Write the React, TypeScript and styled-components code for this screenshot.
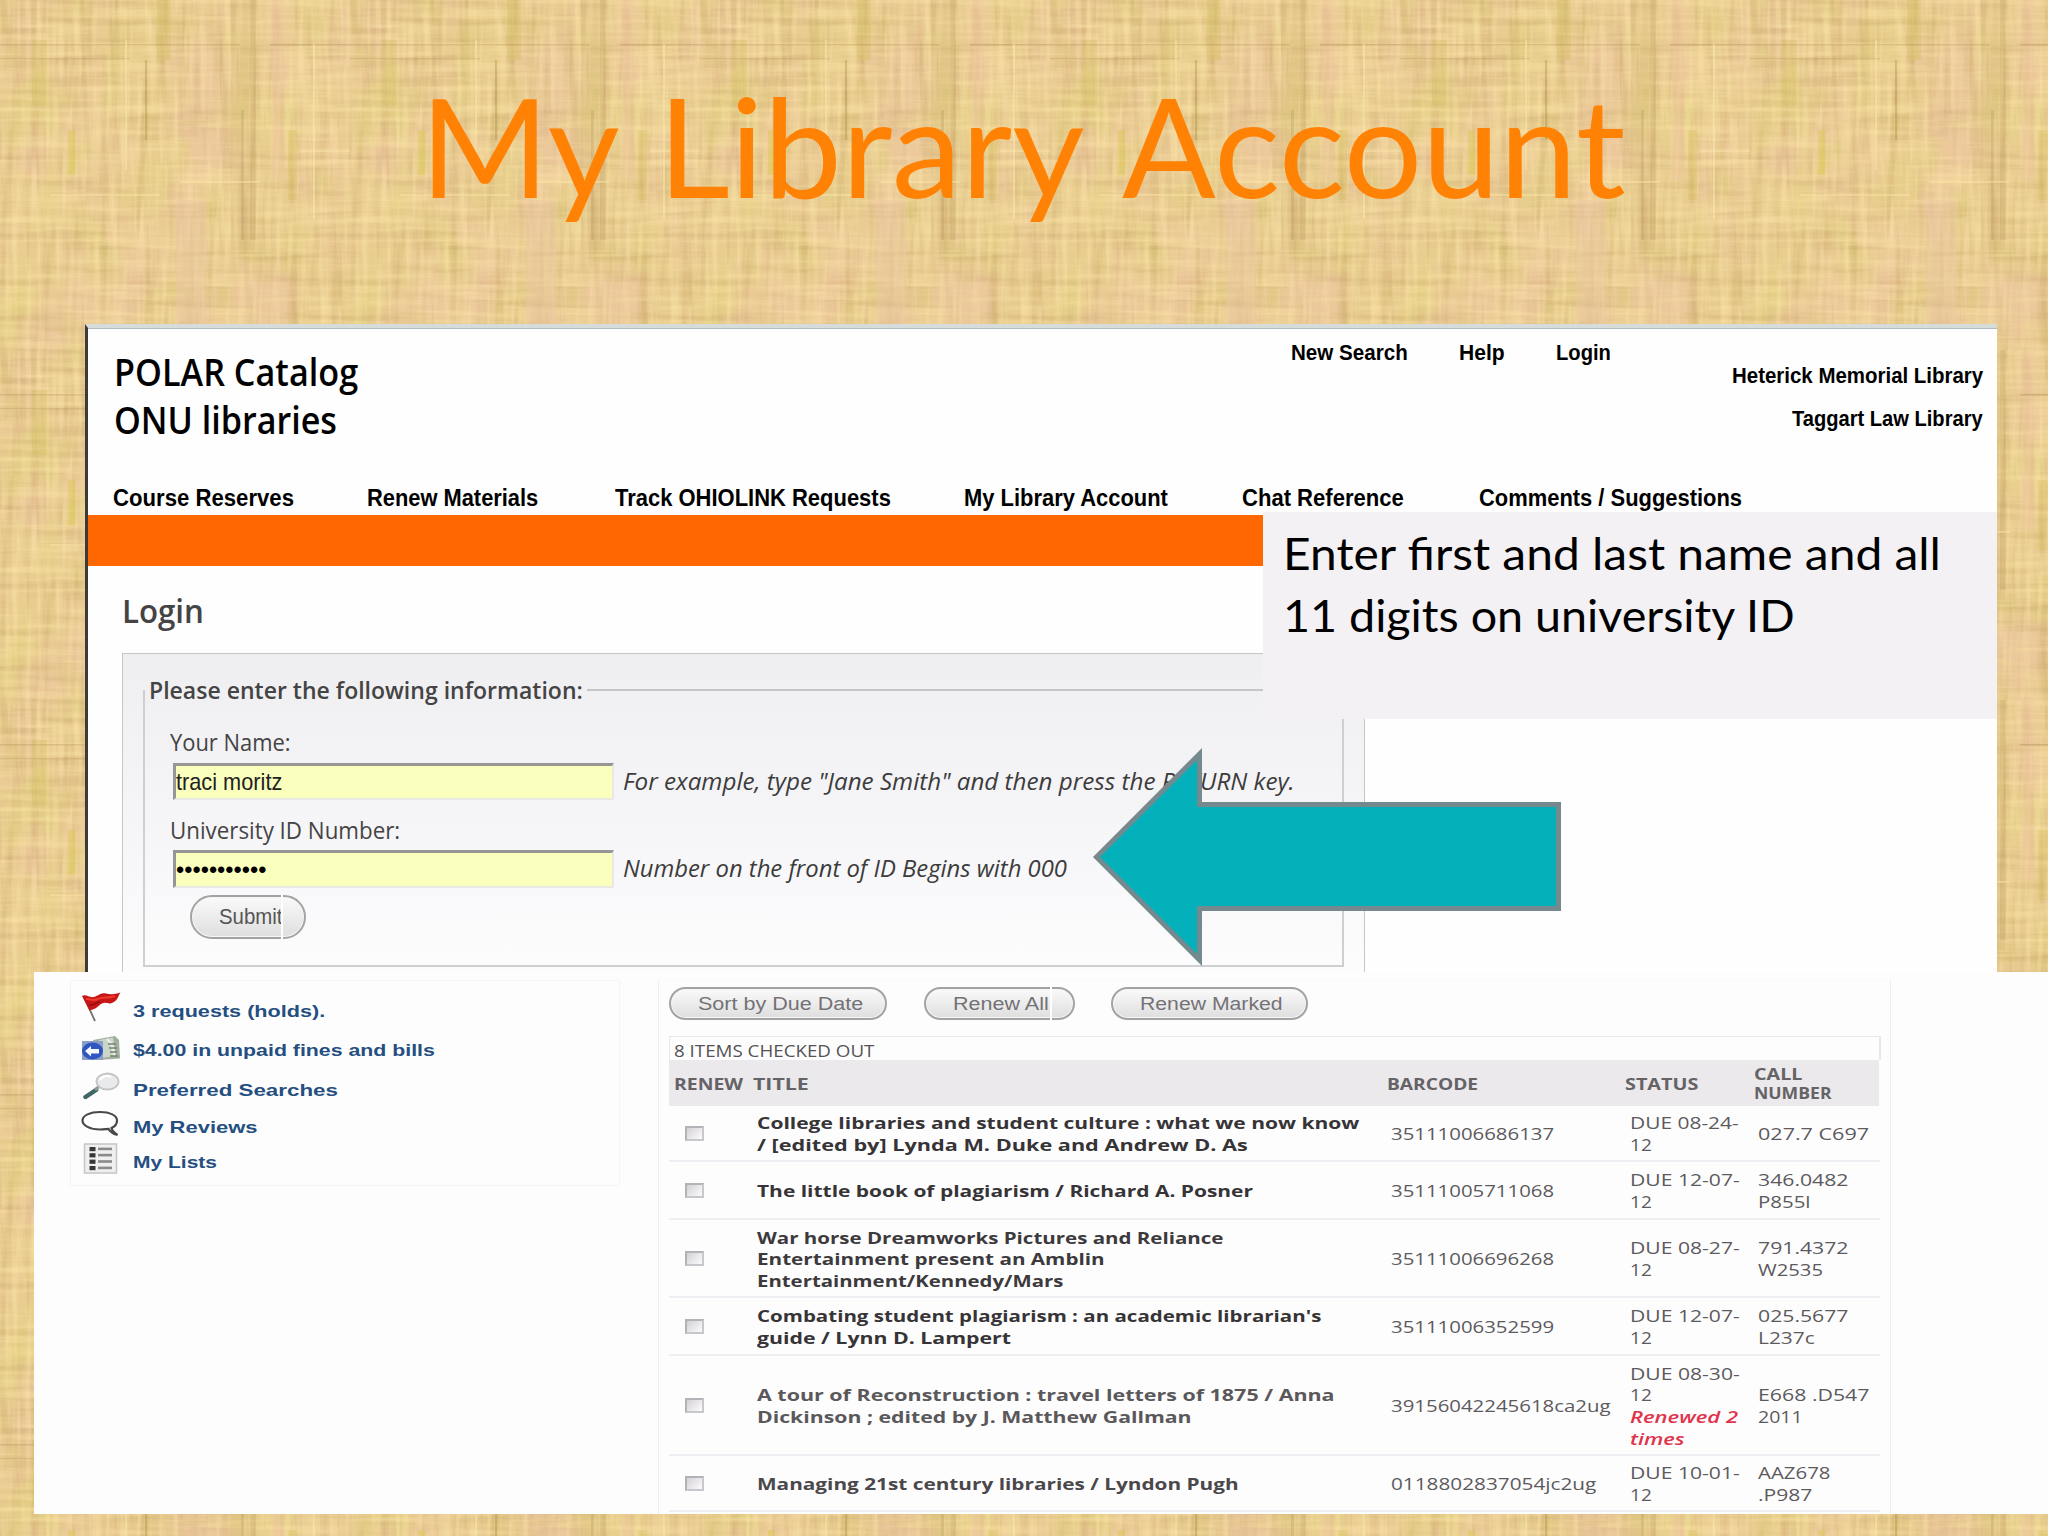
import React, { useLayoutEffect, useRef, useState } from "react";
import styled, { createGlobalStyle } from "styled-components";

const HUMAN = '"Open Sans", "Noto Sans", sans-serif';
const ARIAL = '"Liberation Sans", Arial, sans-serif';
const SLIDE = 'Lato, "Open Sans", sans-serif';

const GlobalStyle = createGlobalStyle`
  * { box-sizing: border-box; }
  body { margin: 0; background: #ebd196; }
`;

/* ---------- text that fills a given measure ---------- */

interface LineProps {
  $w: number;
  $size: number;
  $lh: number;
  $font: string;
  $weight: number;
  $color: string;
  $italic: boolean;
}

const Line = styled.span<LineProps>`
  display: block;
  flex: none;
  width: ${(p) => p.$w}px;
  height: ${(p) => p.$lh}px;
  line-height: ${(p) => p.$lh}px;
  font-family: ${(p) => p.$font};
  font-size: ${(p) => p.$size}px;
  font-weight: ${(p) => p.$weight};
  font-style: ${(p) => (p.$italic ? "italic" : "normal")};
  color: ${(p) => p.$color};
  text-align: left;
  white-space: pre;
`;

const Stretch = styled.span`
  display: inline-block;
  transform-origin: 0 50%;
`;

interface FitProps {
  children: string;
  w: number;
  size: number;
  lh: number;
  font?: string;
  weight?: number;
  color?: string;
  italic?: boolean;
}

function Fit({ children, w, size, lh, font = HUMAN, weight = 400, color = "#000", italic = false }: FitProps) {
  const ref = useRef<HTMLSpanElement>(null);
  const [scale, setScale] = useState(1);
  useLayoutEffect(() => {
    const el = ref.current;
    if (el && el.offsetWidth > 0) setScale(w / el.offsetWidth);
  }, [w, children]);
  return (
    <Line $w={w} $size={size} $lh={lh} $font={font} $weight={weight} $color={color} $italic={italic}>
      <Stretch ref={ref} style={{ transform: `scaleX(${scale})` }}>
        {children}
      </Stretch>
    </Line>
  );
}

/* ---------- slide ---------- */

const Slide = styled.main`
  position: relative;
  width: 2048px;
  height: 1536px;
  overflow: hidden;
  display: flex;
  flex-direction: column;
  background: #e9cf92;
`;

const TextureSvg = styled.svg`
  position: absolute;
  inset: 0;
`;

const TitleBar = styled.header`
  position: relative;
  flex: none;
  display: flex;
  align-items: flex-start;
  gap: 38px;
  height: 324px;
  padding: 65px 0 0 420px;
`;

interface WeaveProps {
  id: string;
  freq: string;
  seed: number;
  rgb: number[];
  gain: number;
  bias: number;
}

function Weave({ id, freq, seed, rgb, gain, bias }: WeaveProps) {
  const [r, g, b] = rgb.map((v) => v / 255);
  return (
    <filter id={id} filterUnits="userSpaceOnUse" x="0" y="0" width="350" height="350" colorInterpolationFilters="sRGB">
      <feTurbulence type="fractalNoise" baseFrequency={freq} numOctaves={3} seed={seed} stitchTiles="stitch" />
      <feColorMatrix values={`0 0 0 0 ${r}  0 0 0 0 ${g}  0 0 0 0 ${b}  ${gain} 0 0 0 ${bias}`} />
    </filter>
  );
}

const weaves: (WeaveProps & { opacity: number })[] = [
  { id: "patchPink", freq: "0.016 0.012", seed: 4, rgb: [238, 198, 160], gain: 3, bias: -1.2, opacity: 0.7 },
  { id: "patchGreen", freq: "0.03 0.014", seed: 11, rgb: [220, 204, 118], gain: 3, bias: -1.45, opacity: 0.5 },
  { id: "warpDark", freq: "0.1 0.008", seed: 7, rgb: [184, 144, 82], gain: 2.4, bias: -1.14, opacity: 0.34 },
  { id: "weftDark", freq: "0.008 0.11", seed: 15, rgb: [184, 146, 86], gain: 2.4, bias: -1.16, opacity: 0.3 },
  { id: "warpLight", freq: "0.16 0.01", seed: 21, rgb: [255, 234, 174], gain: 3, bias: -1.35, opacity: 0.38 },
  { id: "weftLight", freq: "0.01 0.15", seed: 33, rgb: [255, 232, 170], gain: 3, bias: -1.35, opacity: 0.38 },
];

/* long fibres: x, y, width, height, colour, opacity */
const fibres: [number, number, number, number, string, number][] = [
  [231, 0, 24, 250, "#c49c62", 0.13],
  [250, 0, 6, 240, "#a98548", 0.17],
  [241, 110, 3, 130, "#9c7c4c", 0.2],
  [145, 60, 2, 80, "#a98a44", 0.35],
  [68, 130, 7, 45, "#d4c43c", 0.35],
  [288, 130, 9, 70, "#cfbc48", 0.25],
  [157, 0, 14, 60, "#cdb656", 0.28],
  [32, 40, 15, 65, "#cdb94e", 0.24],
  [176, 200, 30, 125, "#ecc6a4", 0.4],
  [272, 0, 12, 180, "#ecc2a0", 0.35],
  [0, 44, 240, 1.5, "#b08c50", 0.3],
  [270, 44, 80, 1.5, "#a8844a", 0.35],
  [0, 58, 130, 1.5, "#b8945a", 0.28],
  [50, 194, 110, 2, "#fbe6a4", 0.5],
  [180, 181, 80, 2, "#fbe4a4", 0.5],
  [300, 150, 50, 2, "#fbe4a8", 0.5],
  [125, 40, 2, 130, "#fbe6a8", 0.5],
  [313, 44, 2, 175, "#fbeab4", 0.5],
];

function Papyrus() {
  return (
    <TextureSvg width="2048" height="1536" viewBox="0 0 2048 1536">
      <defs>
        {weaves.map(({ opacity, ...w }) => (
          <Weave key={w.id} {...w} />
        ))}
        <pattern id="papyrus" width="350" height="350" patternUnits="userSpaceOnUse">
          <rect width="350" height="350" fill="#e9cd90" />
          {weaves.map((w) => (
            <g key={w.id} opacity={w.opacity}>
              <rect width="350" height="350" filter={`url(#${w.id})`} />
            </g>
          ))}
          {fibres.map(([x, y, w, h, c, o]) => (
            <rect key={`${x}-${y}`} x={x} y={y} width={w} height={h} fill={c} opacity={o} />
          ))}
        </pattern>
      </defs>
      <rect width="2048" height="1536" fill="url(#papyrus)" />
    </TextureSvg>
  );
}

/* ---------- catalog window ---------- */

const Catalog = styled.section`
  position: relative;
  flex: none;
  width: 1912px;
  height: 648px;
  margin-left: 85px;
  border-top: 4px solid #d6dcda;
  border-left: 3px solid #3d3a3a;
  background: #fefefe;
  overflow: hidden;
`;

const Masthead = styled.div`
  display: flex;
  height: 154px;
  border-top: 1px solid #b3bdc1;
`;

const Brand = styled.div`
  width: 1203px;
  padding: 19px 0 0 26px;
`;

const QuickLinks = styled.nav`
  display: flex;
  gap: 51px;
  width: 441px;
  padding-top: 11px;
`;

const Libraries = styled.div`
  flex: 1;
  display: flex;
  flex-direction: column;
  align-items: flex-end;
  padding: 25px 14px 0 0;
`;

const NavRow = styled.nav`
  display: grid;
  grid-template-columns: 254px 248px 349px 278px 237px 263px;
  height: 33px;
  padding: 1px 0 0 25px;
`;

const OrangeBand = styled.div`
  height: 51px;
  background: #ff6700;
`;

const Content = styled.div`
  padding: 24px 0 0 34px;
`;

const FormPanel = styled.div`
  width: 1243px;
  height: 330px;
  margin-top: 22px;
  padding: 28px 20px 0 20px;
  border: 1.5px solid #c6c5c7;
  background: linear-gradient(#efeef0, #f4f3f6 40%, #fcfcfd 95%);
`;

const LegendRow = styled.div`
  display: flex;
  align-items: center;
  gap: 4px;
  height: 16px;
  margin-left: 6px;
`;

const Rule = styled.span`
  flex: 1;
  height: 2px;
  background: #c6c5c7;
`;

const FieldBox = styled.div`
  height: 277px;
  margin-top: -8px;
  padding: 39px 0 0 25px;
  border: 2px solid #cfced0;
  border-top: 0;
`;

const SubLabel = styled.div`
  padding-top: 17px;
`;

const FieldRow = styled.div<{ $h: number; $gap: number }>`
  display: flex;
  align-items: center;
  gap: 9px;
  height: ${(p) => p.$h}px;
  margin: ${(p) => p.$gap}px 0 0 3px;
`;

const Input = styled.div`
  display: flex;
  align-items: center;
  width: 441px;
  height: 100%;
  border-style: solid;
  border-width: 3px 2px 2px 3px;
  border-color: #969694 #ebe9e8 #ebe9e8 #969694;
  background: #faffbd;
`;

const HintSlot = styled.div`
  margin-top: -2px;
`;

const Pill = styled.button<{ $w: number; $h: number; $seam?: boolean }>`
  position: relative;
  display: flex;
  align-items: center;
  flex: none;
  width: ${(p) => p.$w}px;
  height: ${(p) => p.$h}px;
  padding: 0 0 0 27px;
  border: 2px solid #a3a2a4;
  border-radius: ${(p) => p.$h / 2}px;
  background: linear-gradient(#fafafa, #dfdedf);
  box-shadow: inset 0 0 0 1px #f6f6f6;
  &::after {
    content: "";
    display: ${(p) => (p.$seam ? "block" : "none")};
    position: absolute;
    top: -2px;
    bottom: -2px;
    right: 21px;
    width: 2px;
    background: #fdfdfd;
  }
`;

const SubmitSlot = styled.div`
  margin: 7px 0 0 20px;
`;

/* ---------- slide annotations ---------- */

const Callout = styled.aside`
  position: absolute;
  left: 1263px;
  top: 512px;
  width: 734px;
  height: 207px;
  padding: 10px 0 0 20px;
  background: #f3f1f3;
`;

const Arrow = styled.svg`
  position: absolute;
  left: 1088px;
  top: 740px;
`;

/* ---------- account panel ---------- */

const Account = styled.section`
  position: relative;
  flex: none;
  display: flex;
  align-items: flex-start;
  height: 542px;
  margin-left: 34px;
  padding: 8px 0 0 36px;
  background: #fefdfe;
  overflow: hidden;
`;

const Shortcuts = styled.ul`
  list-style: none;
  width: 550px;
  height: 206px;
  margin: 0;
  padding: 11px 0 0 10px;
  border: 1px solid #f6f4f9;
`;

const Shortcut = styled.li<{ $h: number }>`
  display: grid;
  grid-template-columns: 40px 1fr;
  column-gap: 12px;
  align-items: start;
  height: ${(p) => p.$h}px;
`;

const LinkSlot = styled.div<{ $top: number }>`
  padding-top: ${(p) => p.$top}px;
`;

const Checkouts = styled.div`
  width: 1233px;
  height: 560px;
  margin-left: 38px;
  padding: 6px 0 0 10px;
  border: 1px solid #efedf2;
  border-top-color: #faf8fb;
`;

const Actions = styled.div`
  display: flex;
  height: 49px;
`;

const ActionGap = styled.span<{ $w: number }>`
  width: ${(p) => p.$w}px;
`;

const Caption = styled.div`
  width: 1212px;
  height: 24px;
  padding: 4px 0 0 4px;
  border: 1px solid #e9e7ec;
  border-width: 1px 2px 0 1px;
`;

const columns = "88px 634px 239px 128px 120px";

const HeadRow = styled.div`
  display: grid;
  grid-template-columns: ${columns};
  align-items: center;
  width: 1210px;
  height: 46px;
  padding-top: 2px;
  background: #ebe9ec;
`;

const HeadCell = styled.div<{ $shift: number }>`
  margin-left: ${(p) => p.$shift}px;
`;

const Row = styled.div<{ $h: number }>`
  display: grid;
  grid-template-columns: ${columns};
  align-items: center;
  width: 1211px;
  height: ${(p) => p.$h}px;
  padding-top: 2px;
  border-bottom: 2px solid #f0eef2;
`;

const CheckBox = styled.span`
  display: block;
  width: 19px;
  height: 15px;
  margin: -2px 0 0 16px;
  border: 2px solid #b4b2b6;
  border-right-color: #c9c7cb;
  border-bottom-color: #c9c7cb;
  background: linear-gradient(135deg, #d4d2d6, #fbfafc);
`;

/* ---------- icons ---------- */

function FlagIcon() {
  return (
    <svg width="40" height="32" viewBox="0 0 40 32">
      <path d="M2.5 4 L14 29" stroke="#77706c" strokeWidth="1.8" />
      <path d="M1 4 C5 1.5 8 6 13 5 C18 3.5 20 0.5 25 1.5 C29 2.5 34 2.5 39.5 0.5 C37 4 37 8 32 10.5 C28 13 25 9.5 21 11.5 C17 13.5 16 17 8.5 18.5 Z" fill="#c81616" />
      <path d="M5 7 C9 6.5 12 9.5 17 7 C22 4 27 7 34 4" stroke="#ee3a2e" strokeWidth="2" fill="none" />
      <path d="M8 13 C12 14 15 11 19 9.5" stroke="#8f0c0c" strokeWidth="1.5" fill="none" />
    </svg>
  );
}

function MoneyIcon() {
  return (
    <svg width="40" height="26" viewBox="0 0 40 26">
      <path d="M12 5 L34 1 L38 5 L39 23.5 L18 25 Z" fill="#a3ada0" />
      <path d="M18 5 L32 2.5 L35 21 L20 23 Z" fill="#cbd5c8" />
      <path d="M26 4 C31 8 33 14 33 21" stroke="#eef3ec" strokeWidth="2" fill="none" />
      <path d="M27 9 h8 M28 13 h8 M29 17 h7 M29 21 h8" stroke="#758072" strokeWidth="1.4" />
      <rect x="1" y="6" width="21" height="19" fill="#8a9fc8" />
      <ellipse cx="11.5" cy="16" rx="10.5" ry="8.5" fill="#2f55c0" />
      <path d="M4 16 L10 11 V14 H18 V18.5 H10 V21.5 Z" fill="#f4f8ff" />
    </svg>
  );
}

function SearchIcon() {
  return (
    <svg width="40" height="28" viewBox="0 0 40 28">
      <path d="M4.5 25 L15 18" stroke="#3f6662" strokeWidth="4.5" strokeLinecap="round" />
      <path d="M14 18 L18 14.5" stroke="#8c9a9b" strokeWidth="3" />
      <ellipse cx="26.5" cy="9.5" rx="11" ry="8" fill="#e9eaeb" stroke="#c3c5c7" strokeWidth="1.8" />
      <path d="M19 8 C21 4 26 3 30 5" stroke="#fff" strokeWidth="2" fill="none" />
    </svg>
  );
}

function BubbleIcon() {
  return (
    <svg width="40" height="27" viewBox="0 0 40 27">
      <path
        d="M30.5 18 C34 16.5 36 14 36 10.5 C36 5.5 29 2 19 2 C9 2 1.5 5.5 1.5 10.5 C1.5 15.5 9 19.5 19 19.5 C22 19.5 25 19 27.5 18.8 C28.5 21 32 23.8 36.5 25 C33 22.5 31 20.5 30.5 18 Z"
        fill="#fff"
        stroke="#4b4848"
        strokeWidth="2.2"
      />
    </svg>
  );
}

function ListIcon() {
  return (
    <svg width="40" height="31" viewBox="0 0 40 31">
      <rect x="3.5" y="1" width="32" height="29" fill="#f0eff0" stroke="#c9c7c9" strokeWidth="1.6" />
      {[4, 10.2, 16.6, 23].map((y) => (
        <g key={y}>
          <rect x="8.5" y={y} width="6" height="4.2" fill="#383638" />
          <rect x="17" y={y + 0.6} width="14" height="2.6" fill="#8b898b" />
        </g>
      ))}
    </svg>
  );
}

/* ---------- data ---------- */

type TextRun = [string, number];

interface Item {
  h: number;
  title: TextRun[];
  barcode: TextRun;
  due: TextRun;
  renewed?: boolean;
  call: TextRun[];
  tone: string;
}

const items: Item[] = [
  { h: 56, title: [["College libraries and student culture : what we now know", 602], ["/ [edited by] Lynda M. Duke and Andrew D. As", 491]], barcode: ["35111006686137", 163], due: ["DUE 08-24-", 109], call: [["027.7 C697", 111]], tone: "#363436" },
  { h: 58, title: [["The little book of plagiarism / Richard A. Posner", 496]], barcode: ["35111005711068", 163], due: ["DUE 12-07-", 110], call: [["346.0482", 90], ["P855l", 52]], tone: "#363436" },
  { h: 78, title: [["War horse Dreamworks Pictures and Reliance", 467], ["Entertainment present an Amblin", 348], ["Entertainment/Kennedy/Mars", 306]], barcode: ["35111006696268", 163], due: ["DUE 08-27-", 110], call: [["791.4372", 90], ["W2535", 65]], tone: "#3c3a3c" },
  { h: 58, title: [["Combating student plagiarism : an academic librarian's", 564], ["guide / Lynn D. Lampert", 254]], barcode: ["35111006352599", 163], due: ["DUE 12-07-", 110], call: [["025.5677", 90], ["L237c", 57]], tone: "#363436" },
  { h: 100, title: [["A tour of Reconstruction : travel letters of 1875 / Anna", 577], ["Dickinson ; edited by J. Matthew Gallman", 435]], barcode: ["39156042245618ca2ug", 220], due: ["DUE 08-30-", 110], renewed: true, call: [["E668 .D547", 111], ["2011", 45]], tone: "#5a585a" },
  { h: 56, title: [["Managing 21st century libraries / Lyndon Pugh", 481]], barcode: ["0118802837054jc2ug", 205], due: ["DUE 10-01-", 110], call: [["AAZ678", 73], [".P987", 55]], tone: "#4a484a" },
];

const shortcuts = [
  { icon: <FlagIcon />, text: "3 requests (holds).", w: 192, h: 43, top: 10 },
  { icon: <MoneyIcon />, text: "$4.00 in unpaid fines and bills", w: 302, h: 37, top: 6 },
  { icon: <SearchIcon />, text: "Preferred Searches", w: 205, h: 38, top: 9 },
  { icon: <BubbleIcon />, text: "My Reviews", w: 124, h: 33, top: 8 },
  { icon: <ListIcon />, text: "My Lists", w: 84, h: 32, top: 10 },
];

const titleWords: TextRun[] = [
  ["My", 200],
  ["Library", 426],
  ["Account", 504],
];

const navLinks: TextRun[] = [
  ["Course Reserves", 181],
  ["Renew Materials", 171],
  ["Track OHIOLINK Requests", 276],
  ["My Library Account", 204],
  ["Chat Reference", 162],
  ["Comments / Suggestions", 263],
];

const quickLinks: TextRun[] = [
  ["New Search", 117],
  ["Help", 46],
  ["Login", 55],
];

const headLabel = { size: 16, lh: 19, weight: 700, color: "#656366" };
const cell = { size: 16.5, lh: 21.6, color: "#5c5a5d" };

export default function App() {
  return (
    <>
      <GlobalStyle />
      <Slide>
        <Papyrus />
        <TitleBar>
          {titleWords.map(([t, w]) => (
            <Fit key={t} w={w} size={138} lh={160} font={SLIDE} color="#ff8205">{t}</Fit>
          ))}
        </TitleBar>

        <Catalog>
          <Masthead>
            <Brand>
              <Fit w={244} size={37} lh={48} weight={600}>POLAR Catalog</Fit>
              <Fit w={223} size={37} lh={48} weight={600}>ONU libraries</Fit>
            </Brand>
            <QuickLinks>
              {quickLinks.map(([t, w]) => (
                <Fit key={t} w={w} size={22} lh={26} font={ARIAL} weight={700}>{t}</Fit>
              ))}
            </QuickLinks>
            <Libraries>
              <Fit w={251} size={22} lh={43} font={ARIAL} weight={700}>Heterick Memorial Library</Fit>
              <Fit w={191} size={22} lh={43} font={ARIAL} weight={700}>Taggart Law Library</Fit>
            </Libraries>
          </Masthead>
          <NavRow>
            {navLinks.map(([t, w]) => (
              <Fit key={t} w={w} size={23} lh={30} font={ARIAL} weight={700}>{t}</Fit>
            ))}
          </NavRow>
          <OrangeBand />
          <Content>
            <Fit w={82} size={32} lh={41} weight={600} color="#444">Login</Fit>
            <FormPanel>
              <LegendRow>
                <Fit w={434} size={23.5} lh={30} weight={600} color="#444">Please enter the following information:</Fit>
                <Rule />
              </LegendRow>
              <FieldBox>
                <Fit w={121} size={23} lh={26} color="#444">Your Name:</Fit>
                <FieldRow $h={37} $gap={8}>
                  <Input>
                    <Fit w={106} size={24} lh={28} font={ARIAL} color="#222">traci moritz</Fit>
                  </Input>
                  <HintSlot>
                    <Fit w={672} size={23.5} lh={28} italic color="#3c3c3c">For example, type "Jane Smith" and then press the RETURN key.</Fit>
                  </HintSlot>
                </FieldRow>
                <SubLabel>
                  <Fit w={230} size={23} lh={26} color="#444">University ID Number:</Fit>
                </SubLabel>
                <FieldRow $h={38} $gap={7}>
                  <Input>
                    <Fit w={90} size={24} lh={28} font={ARIAL} color="#000">•••••••••••</Fit>
                  </Input>
                  <HintSlot>
                    <Fit w={444} size={23.5} lh={28} italic color="#3c3c3c">Number on the front of ID Begins with 000</Fit>
                  </HintSlot>
                </FieldRow>
                <SubmitSlot>
                  <Pill $w={116} $h={44} $seam>
                    <Fit w={63} size={22} lh={28} font={ARIAL} color="#555">Submit</Fit>
                  </Pill>
                </SubmitSlot>
              </FieldBox>
            </FormPanel>
          </Content>
        </Catalog>

        <Account>
          <Shortcuts>
            {shortcuts.map((s) => (
              <Shortcut key={s.text} $h={s.h}>
                {s.icon}
                <LinkSlot $top={s.top}>
                  <Fit w={s.w} size={17} lh={20} font={ARIAL} weight={700} color="#244f80">{s.text}</Fit>
                </LinkSlot>
              </Shortcut>
            ))}
          </Shortcuts>
          <Checkouts>
            <Actions>
              <Pill $w={218} $h={33}>
                <Fit w={165} size={17.5} lh={22} font={ARIAL} color="#747276">Sort by Due Date</Fit>
              </Pill>
              <ActionGap $w={37} />
              <Pill $w={151} $h={33} $seam>
                <Fit w={96} size={17.5} lh={22} font={ARIAL} color="#747276">Renew All</Fit>
              </Pill>
              <ActionGap $w={36} />
              <Pill $w={197} $h={33}>
                <Fit w={143} size={17.5} lh={22} font={ARIAL} color="#747276">Renew Marked</Fit>
              </Pill>
            </Actions>
            <Caption>
              <Fit w={200} size={16.5} lh={20} color="#555356">8 ITEMS CHECKED OUT</Fit>
            </Caption>
            <HeadRow>
              <HeadCell $shift={5}><Fit w={69} {...headLabel}>RENEW</Fit></HeadCell>
              <HeadCell $shift={-4}><Fit w={56} {...headLabel}>TITLE</Fit></HeadCell>
              <HeadCell $shift={-4}><Fit w={91} {...headLabel}>BARCODE</Fit></HeadCell>
              <HeadCell $shift={-5}><Fit w={73} {...headLabel}>STATUS</Fit></HeadCell>
              <HeadCell $shift={-4}>
                <Fit w={48} {...headLabel}>CALL</Fit>
                <Fit w={77} {...headLabel}>NUMBER</Fit>
              </HeadCell>
            </HeadRow>
            {items.map((it) => (
              <Row key={it.barcode[0]} $h={it.h}>
                <CheckBox />
                <div>
                  {it.title.map(([t, w]) => (
                    <Fit key={t} w={w} {...cell} weight={700} color={it.tone}>{t}</Fit>
                  ))}
                </div>
                <Fit w={it.barcode[1]} {...cell}>{it.barcode[0]}</Fit>
                <div>
                  <Fit w={it.due[1]} {...cell}>{it.due[0]}</Fit>
                  <Fit w={22} {...cell}>12</Fit>
                  {it.renewed && (
                    <>
                      <Fit w={108} {...cell} weight={600} italic color="#e0344c">Renewed 2</Fit>
                      <Fit w={54} {...cell} weight={600} italic color="#e0344c">times</Fit>
                    </>
                  )}
                </div>
                <div>
                  {it.call.map(([t, w]) => (
                    <Fit key={t} w={w} {...cell}>{t}</Fit>
                  ))}
                </div>
              </Row>
            ))}
          </Checkouts>
        </Account>

        <Callout>
          <Fit w={658} size={45} lh={62} font={SLIDE}>Enter first and last name and all</Fit>
          <Fit w={512} size={45} lh={62} font={SLIDE}>11 digits on university ID</Fit>
        </Callout>
        <Arrow width="480" height="232" viewBox="1088 740 480 232">
          <path
            d="M1096.5 857 L1199.5 754 V804.5 H1558.5 V908.5 H1199.5 V960 Z"
            fill="#04b1bb"
            stroke="#748a8f"
            strokeWidth="5"
            strokeMiterlimit="10"
          />
        </Arrow>
      </Slide>
    </>
  );
}
